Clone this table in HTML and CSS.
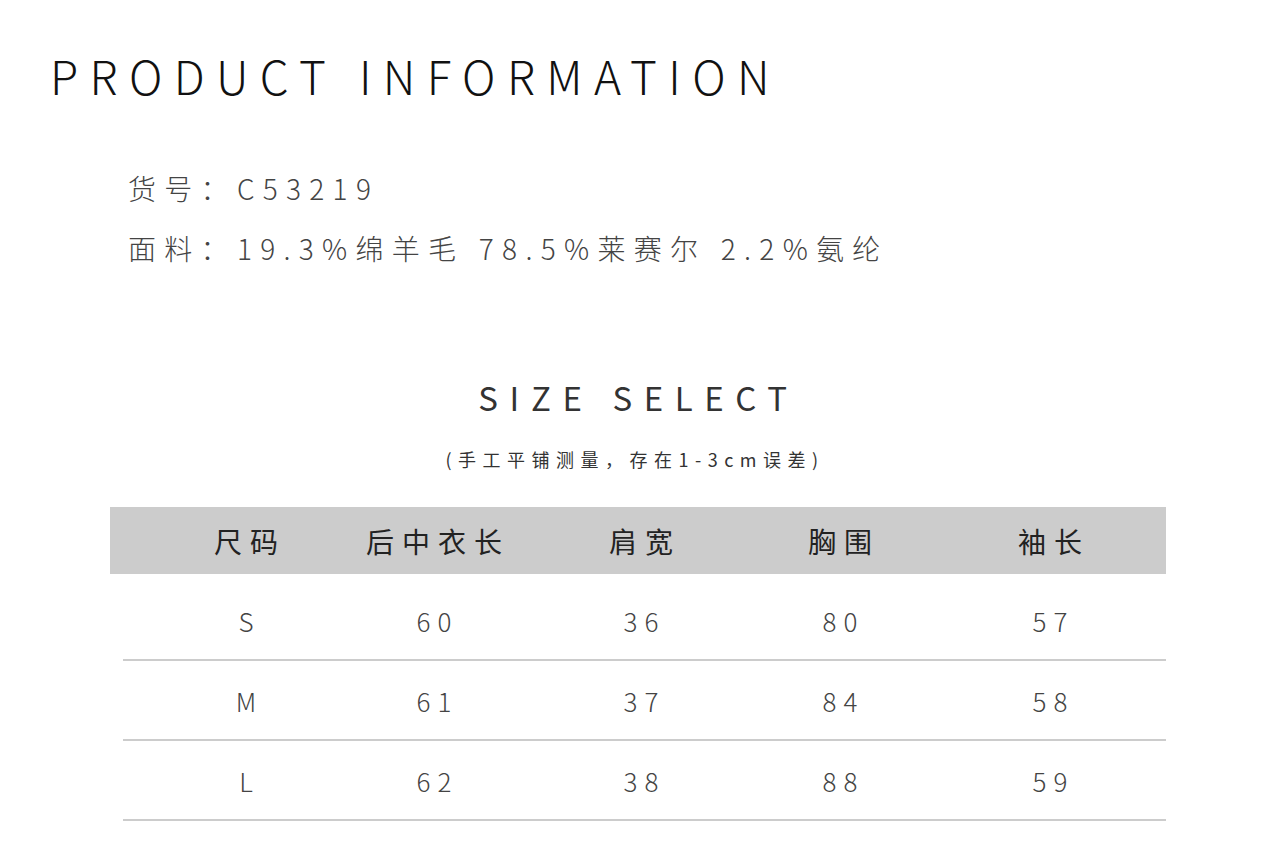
FILE: index.html
```html
<!DOCTYPE html>
<html lang="zh-CN">
<head>
<meta charset="utf-8">
<title>Product Information</title>
<link rel="stylesheet" href="styles.css">
</head>
<body>
<div class="page">
  <h1 class="title">PRODUCT INFORMATION</h1>
  <div class="info">
    <p class="info-line">货号：C53219</p>
    <p class="info-line">面料：19.3%绵羊毛 78.5%莱赛尔 2.2%氨纶</p>
  </div>
  <h2 class="size-title">SIZE SELECT</h2>
  <p class="size-note">(手工平铺测量，存在1-3cm误差)</p>
  <div class="table">
    <div class="thead">
      <div class="cell">尺码</div>
      <div class="cell">后中衣长</div>
      <div class="cell">肩宽</div>
      <div class="cell">胸围</div>
      <div class="cell">袖长</div>
    </div>
    <div class="tbody">
      <div class="row">
        <div class="cell">S</div><div class="cell">60</div><div class="cell">36</div><div class="cell">80</div><div class="cell">57</div>
      </div>
      <div class="row">
        <div class="cell">M</div><div class="cell">61</div><div class="cell">37</div><div class="cell">84</div><div class="cell">58</div>
      </div>
      <div class="row">
        <div class="cell">L</div><div class="cell">62</div><div class="cell">38</div><div class="cell">88</div><div class="cell">59</div>
      </div>
    </div>
  </div>
</div>
</body>
</html>
```
FILE: styles.css
```css
* { box-sizing: border-box; }
html, body { margin: 0; padding: 0; background: #fff; }
body {
  font-family: "Noto Sans CJK SC", "Noto Sans", sans-serif;
  font-weight: 300;
  color: #333;
}
.page { width: 1280px; height: 852px; overflow: hidden; }
.title {
  margin: 0;
  padding: 47px 0 0 50px;
  font-size: 46px;
  line-height: 56px;
  font-weight: 300;
  letter-spacing: 11.4px;
  color: #111;
}
.info { padding: 55px 0 0 128px; }
.info-line {
  margin: 0;
  font-size: 28px;
  line-height: 60px;
  letter-spacing: 8.3px;
  color: #444;
}
.size-title {
  margin: 97px 0 0;
  text-align: center;
  font-size: 33px;
  line-height: 44px;
  font-weight: 400;
  letter-spacing: 11.6px;
  color: #333;
  padding-right: 3px;
}
.size-note {
  margin: 27px 0 0;
  text-align: center;
  font-size: 18px;
  line-height: 26px;
  font-weight: 400;
  letter-spacing: 6.5px;
  color: #333;
  padding-right: 10px;
}
.table { margin: 35px 0 0 110px; width: 1056px; }
.thead {
  display: grid;
  grid-template-columns: 176px 200px 214px 184px 236px;
  padding-left: 48px;
  height: 67px;
  align-items: center;
  background: #cccccc;
  font-size: 28px;
  font-weight: 400;
  letter-spacing: 8px;
  color: #222;
  overflow: hidden;
}
.thead .cell { padding-left: 8px; }
.cell { text-align: center; white-space: nowrap; }
.tbody { margin-left: 13px; padding-top: 7px; }
.row {
  display: grid;
  grid-template-columns: 176px 200px 214px 184px 236px;
  padding-left: 35px;
  height: 80px;
  align-items: center;
  border-bottom: 2px solid #cccccc;
  font-size: 26px;
  letter-spacing: 7px;
  color: #444;
  overflow: hidden;
}
.row .cell { padding-left: 7px; }
```
